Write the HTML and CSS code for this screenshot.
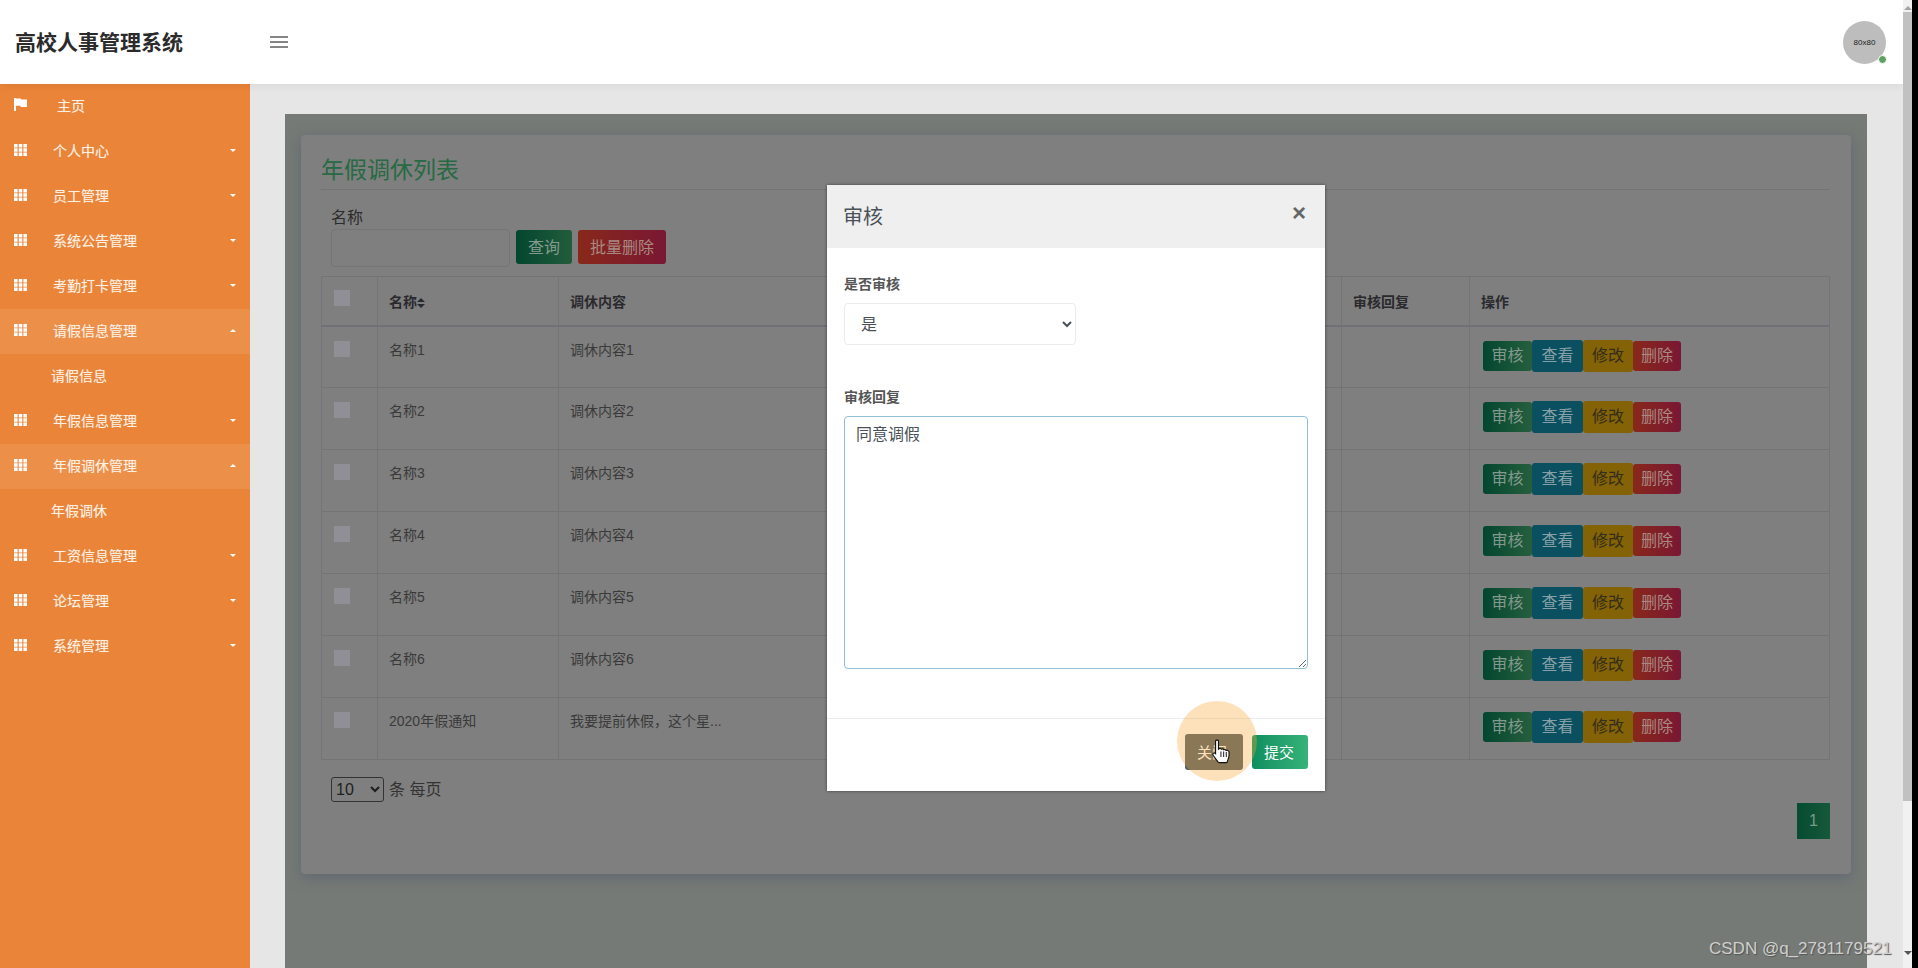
FILE: index.html
```html
<!DOCTYPE html>
<html lang="zh-CN">
<head>
    <meta charset="UTF-8">
    <title>高校人事管理系统</title>
    <link rel="stylesheet" href="styles.css">
</head>
<body>
    <svg class="icon-defs" width="0" height="0">
        <symbol id="icon-th" viewBox="0 0 13 12">
            <path d="M0 0h3.6v3.4H0zM4.7 0h3.6v3.4H4.7zM9.4 0H13v3.4H9.4zM0 4.3h3.6v3.4H0zM4.7 4.3h3.6v3.4H4.7zM9.4 4.3H13v3.4H9.4zM0 8.6h3.6V12H0zM4.7 8.6h3.6V12H4.7zM9.4 8.6H13V12H9.4z"/>
        </symbol>
    </svg>

    <div class="app">
        <div class="topbar">
            <div class="brand">高校人事管理系统</div>
            <div class="hamburger"><span></span><span></span><span></span></div>
            <div class="avatar">80x80<span class="online-dot"></span></div>
        </div>

        <div class="layout">
            <div class="sidebar">
                <div class="nav-item home">
                    <svg class="nav-icon" viewBox="0 0 13 13"><path d="M0 0h2v13H0zM2 .4h4.600l1 1.200H13v7.400H7l-1-1.200H2z"/></svg>
                    <span>主页</span>
                </div>
                <div class="nav-item"><svg class="nav-icon"><use href="#icon-th"/></svg><span>个人中心</span><i class="caret"></i></div>
                <div class="nav-item"><svg class="nav-icon"><use href="#icon-th"/></svg><span>员工管理</span><i class="caret"></i></div>
                <div class="nav-item"><svg class="nav-icon"><use href="#icon-th"/></svg><span>系统公告管理</span><i class="caret"></i></div>
                <div class="nav-item"><svg class="nav-icon"><use href="#icon-th"/></svg><span>考勤打卡管理</span><i class="caret"></i></div>
                <div class="nav-item open"><svg class="nav-icon"><use href="#icon-th"/></svg><span>请假信息管理</span><i class="caret"></i></div>
                <div class="nav-sub">请假信息</div>
                <div class="nav-item"><svg class="nav-icon"><use href="#icon-th"/></svg><span>年假信息管理</span><i class="caret"></i></div>
                <div class="nav-item open"><svg class="nav-icon"><use href="#icon-th"/></svg><span>年假调休管理</span><i class="caret"></i></div>
                <div class="nav-sub">年假调休</div>
                <div class="nav-item"><svg class="nav-icon"><use href="#icon-th"/></svg><span>工资信息管理</span><i class="caret"></i></div>
                <div class="nav-item"><svg class="nav-icon"><use href="#icon-th"/></svg><span>论坛管理</span><i class="caret"></i></div>
                <div class="nav-item"><svg class="nav-icon"><use href="#icon-th"/></svg><span>系统管理</span><i class="caret"></i></div>
            </div>

            <div class="main">
                <div class="panel">
                    <div class="card">
                        <div class="card-title">年假调休列表</div>
                        <div class="search">
                            <div class="search-label">名称</div>
                            <div class="search-row">
                                <input type="text" class="search-input">
                                <button class="btn btn-query">查询</button>
                                <button class="btn btn-batch">批量删除</button>
                            </div>
                        </div>

                        <table class="list-table">
                            <colgroup>
                                <col class="col-check">
                                <col class="col-name">
                                <col class="col-content">
                                <col class="col-reply">
                                <col class="col-action">
                            </colgroup>
                            <thead>
                                <tr>
                                    <th><span class="check head-check"></span></th>
                                    <th>名称<svg class="sort-mark" viewBox="0 0 8 10"><path d="M4 0l4 4H0zM4 10l4-4H0z"/></svg></th>
                                    <th>调休内容</th>
                                    <th>审核回复</th>
                                    <th>操作</th>
                                </tr>
                            </thead>
                            <tbody>
                                <tr>
                                    <td><span class="check"></span></td><td>名称1</td><td>调休内容1</td><td></td>
                                    <td><div class="actions"><span class="act act-audit">审核</span><span class="act act-view">查看</span><span class="act act-edit">修改</span><span class="act act-del">删除</span></div></td>
                                </tr>
                                <tr>
                                    <td><span class="check"></span></td><td>名称2</td><td>调休内容2</td><td></td>
                                    <td><div class="actions"><span class="act act-audit">审核</span><span class="act act-view">查看</span><span class="act act-edit">修改</span><span class="act act-del">删除</span></div></td>
                                </tr>
                                <tr>
                                    <td><span class="check"></span></td><td>名称3</td><td>调休内容3</td><td></td>
                                    <td><div class="actions"><span class="act act-audit">审核</span><span class="act act-view">查看</span><span class="act act-edit">修改</span><span class="act act-del">删除</span></div></td>
                                </tr>
                                <tr>
                                    <td><span class="check"></span></td><td>名称4</td><td>调休内容4</td><td></td>
                                    <td><div class="actions"><span class="act act-audit">审核</span><span class="act act-view">查看</span><span class="act act-edit">修改</span><span class="act act-del">删除</span></div></td>
                                </tr>
                                <tr>
                                    <td><span class="check"></span></td><td>名称5</td><td>调休内容5</td><td></td>
                                    <td><div class="actions"><span class="act act-audit">审核</span><span class="act act-view">查看</span><span class="act act-edit">修改</span><span class="act act-del">删除</span></div></td>
                                </tr>
                                <tr>
                                    <td><span class="check"></span></td><td>名称6</td><td>调休内容6</td><td></td>
                                    <td><div class="actions"><span class="act act-audit">审核</span><span class="act act-view">查看</span><span class="act act-edit">修改</span><span class="act act-del">删除</span></div></td>
                                </tr>
                                <tr>
                                    <td><span class="check"></span></td><td>2020年假通知</td><td>我要提前休假，这个星...</td><td></td>
                                    <td><div class="actions"><span class="act act-audit">审核</span><span class="act act-view">查看</span><span class="act act-edit">修改</span><span class="act act-del">删除</span></div></td>
                                </tr>
                            </tbody>
                        </table>

                        <div class="page-size">
                            <select class="size-select"><option>10</option></select>
                            <span class="size-text">条 每页</span>
                        </div>
                        <div class="pager"><span class="page-num">1</span></div>
                    </div>

                    <div class="modal">
                        <div class="modal-header">
                            <div class="modal-title">审核</div>
                            <div class="modal-close">×</div>
                        </div>
                        <div class="modal-body">
                            <div class="field-label">是否审核</div>
                            <select class="field-select"><option>是</option><option>否</option></select>
                            <div class="field-label second">审核回复</div>
                            <textarea class="field-area">同意调假</textarea>
                        </div>
                        <div class="modal-footer">
                            <button class="btn btn-close">关闭</button>
                            <button class="btn btn-submit">提交</button>
                        </div>
                        <div class="click-circle"></div>
                        <svg class="hand-cursor" viewBox="0 0 17 23">
                            <path d="M3.200 1.600C3.200.6 5.800.6 5.800 1.600V9l.4-.4c.6-.5 1.800-.4 2.200.4.6-.5 1.800-.4 2.200.5.7-.4 1.800-.2 2.100.6.8-.4 2.200 0 2.400 1.100.3 2 .2 4.600-.6 6.500l-.9 2.600c-.1.4-.4.7-.8.7H6.400c-.4 0-.7-.2-.9-.5L1 14.400c-.8-1.300.7-2.700 1.900-1.700l.3.3z" fill="#fff" stroke="#111" stroke-width="1"/>
                            <path d="M8 11v5M10.400 11v5M12.800 11.500v4.500" fill="none" stroke="#333" stroke-width="1"/>
                        </svg>
                    </div>
                </div>
            </div>
        </div>
    </div>

    <div class="scrollbar">
        <div class="scroll-arrow up"></div>
        <div class="scroll-thumb"></div>
        <div class="scroll-arrow down"></div>
    </div>
    <div class="window-edge"></div>

    <div class="watermark">CSDN @q_2781179521</div>
</body>
</html>
```

FILE: styles.css
```css
* {
    margin: 0;
    padding: 0;
    box-sizing: border-box;
}

html, body {
    height: 100%;
    overflow: hidden;
}

body {
    display: flex;
    position: relative;
    font-family: "Liberation Sans", "Noto Sans CJK SC", sans-serif;
    font-size: 14px;
    color: #333;
    background-color: #e6e6e6;
}

.icon-defs {
    position: absolute;
}

.app {
    width: 1903px;
    height: 968px;
    display: flex;
    flex-direction: column;
    overflow: hidden;
}

/* top bar */
.topbar {
    height: 84px;
    flex: none;
    display: flex;
    align-items: center;
    padding: 0 21px 0 15px;
    background-color: #fff;
    box-shadow: 0 2px 8px rgba(0, 0, 0, 0.06);
    position: relative;
}

.brand {
    width: 255px;
    padding-bottom: 2px;
    font-size: 21px;
    font-weight: bold;
    color: #2b2b2b;
}

.hamburger {
    display: flex;
    flex-direction: column;
    gap: 3px;
    width: 18px;
}

.hamburger span {
    height: 2px;
    background-color: #858585;
}

.avatar {
    position: relative;
    width: 43px;
    height: 43px;
    margin-left: auto;
    margin-right: -4px;
    border-radius: 50%;
    background-color: #bdbdbd;
    color: #222;
    font-size: 8px;
    line-height: 43px;
    text-align: center;
}

.online-dot {
    position: absolute;
    right: -1px;
    bottom: 0;
    width: 9px;
    height: 9px;
    border: 1.500px solid #fff;
    border-radius: 50%;
    background-color: #5f9f62;
}

/* sidebar */
.layout {
    flex: 1;
    display: flex;
    min-height: 0;
}

.sidebar {
    width: 250px;
    flex: none;
    background-color: #ea8438;
    color: #fdf1e4;
    text-shadow: 0 0 1px rgba(255, 255, 255, 0.35);
}

.nav-item,
.nav-sub {
    height: 45px;
    display: flex;
    align-items: center;
    padding-left: 14px;
}

.nav-item span {
    padding-bottom: 3px;
}

.nav-item.open {
    background-color: #ec8f49;
}

.nav-sub {
    padding-left: 51px;
    padding-bottom: 4px;
}

.nav-icon {
    width: 13px;
    height: 12px;
    margin-right: 26px;
    margin-bottom: 3px;
    fill: #fff;
}

.home .nav-icon {
    height: 13px;
    margin-right: 30px;
    margin-bottom: 5px;
}

.caret {
    margin-left: auto;
    margin-right: 14px;
    margin-bottom: 3px;
    border-left: 3.500px solid transparent;
    border-right: 3.500px solid transparent;
    border-top: 3.500px solid #fff;
}

.open .caret {
    border-top: 0;
    border-bottom: 3.500px solid #fff;
}

/* main area */
.main {
    flex: 1;
    padding: 30px 37px 0 35px;
}

.panel {
    position: relative;
    height: 100%;
    padding: 21px 16px 0;
    background-color: #757a76;
}

.card {
    height: 739px;
    padding: 16px 21px 0 20px;
    border-radius: 4px;
    background-color: #7f7f7f;
    box-shadow: 0 4px 14px rgba(80, 85, 110, 0.5);
}

.card-title {
    height: 39px;
    font-size: 23px;
    line-height: 38px;
    color: #276a44;
    border-bottom: 1px solid #737378;
}

.search {
    padding-left: 10px;
    margin-top: 17px;
}

.search-label {
    font-size: 16px;
    line-height: 22px;
    color: #2c2c2c;
}

.search-row {
    display: flex;
    align-items: center;
    gap: 6px;
}

.search-input {
    width: 179px;
    height: 38px;
    border: 1px solid #757575;
    border-radius: 4px;
    background-color: #7f7f7f;
}

.btn {
    border: none;
    border-radius: 3px;
    font-family: inherit;
    font-size: 16px;
    height: 34px;
    margin-bottom: 2px;
    padding-bottom: 2px;
}

.btn-query {
    width: 56px;
    background: linear-gradient(90deg, #03462f, #225c3c);
    color: #84998d;
}

.btn-batch {
    width: 88px;
    background: linear-gradient(90deg, #88281a, #7a1734);
    color: #a88a82;
}

/* table */
.list-table {
    width: 1508px;
    margin-top: 9px;
    border-collapse: collapse;
    table-layout: fixed;
    color: #333;
}

.col-check { width: 56px; }
.col-name { width: 181px; }
.col-content { width: 783px; }
.col-reply { width: 128px; }
.col-action { width: 360px; }

.list-table th,
.list-table td {
    border: 1px solid #737378;
    padding: 11px 12px 12px 11px;
    text-align: left;
    vertical-align: top;
    line-height: 24px;
    font-weight: normal;
}

.list-table th {
    height: 49px;
    vertical-align: middle;
    padding-top: 10px;
    padding-bottom: 7px;
    font-weight: bold;
    color: #2a2a2e;
    border-bottom: 2px solid #707076;
}

.list-table td {
    height: 62px;
    color: #3a3a3a;
}

.check {
    display: block;
    width: 16px;
    height: 16px;
    margin-top: 3px;
    margin-left: 1px;
    background-color: #8f8f95;
}

.head-check {
    margin-top: -9px;
}

.sort-mark {
    width: 8px;
    height: 10px;
    fill: #2a2a2e;
    vertical-align: -1px;
}

.actions {
    display: flex;
    align-items: center;
    margin-top: 2px;
    padding-left: 2px;
}

.act {
    width: 49px;
    height: 30px;
    border-radius: 3px;
    font-size: 16px;
    line-height: 29px;
    text-align: center;
}

.act-audit {
    background: linear-gradient(90deg, #03462f, #265f3e);
    color: #84998d;
}

.act-view {
    width: 51px;
    height: 32px;
    line-height: 31px;
    background-color: #0a5060;
    color: #87a0a7;
}

.act-edit {
    width: 50px;
    height: 32px;
    line-height: 31px;
    background-color: #846306;
    color: #332d1b;
}

.act-del {
    width: 48px;
    background: linear-gradient(90deg, #88281a, #7a1734);
    color: #a88a82;
}

/* pager */
.page-size {
    display: flex;
    align-items: center;
    gap: 5px;
    height: 25px;
    margin-top: 17px;
    padding-left: 10px;
    font-size: 16px;
    color: #333;
}

.size-text {
    padding-bottom: 3px;
}

.size-select {
    width: 53px;
    height: 25px;
    border: 1px solid #333;
    border-radius: 3px;
    background-color: #7f7f7f;
    color: #1e1e1e;
    font-family: inherit;
    font-size: 16px;
}

.pager {
    display: flex;
    justify-content: flex-end;
    margin-top: 1px;
}

.page-num {
    width: 33px;
    height: 36px;
    background: linear-gradient(90deg, #064c32, #16583a);
    color: #7a9a88;
    font-size: 16px;
    line-height: 36px;
    text-align: center;
}

/* modal */
.modal {
    position: absolute;
    left: 542px;
    top: 71px;
    width: 498px;
    height: 606px;
    background-color: #fff;
    box-shadow: 0 0 3px rgba(0, 0, 0, 0.5);
}

.modal-header {
    height: 63px;
    display: flex;
    align-items: center;
    justify-content: space-between;
    padding: 0 19px 0 16px;
    background-color: #efefef;
}

.modal-title {
    padding-bottom: 2px;
    font-size: 20px;
    color: #4a5157;
}

.modal-close {
    font-size: 24px;
    font-weight: bold;
    color: #666;
    margin-bottom: 8px;
}

.modal-body {
    padding: 25px 17px 0;
}

.field-label {
    font-size: 14px;
    font-weight: bold;
    line-height: 22px;
    color: #555;
}

.field-label.second {
    margin-top: 41px;
}

.field-select {
    display: block;
    width: 232px;
    height: 42px;
    margin-top: 8px;
    padding-left: 12px;
    border: 1px solid #e9ecef;
    border-radius: 4px;
    background-color: #fff;
    color: #495057;
    font-family: inherit;
    font-size: 16px;
}

.field-area {
    display: block;
    width: 464px;
    height: 253px;
    margin-top: 8px;
    padding: 6px 11px;
    border: 1px solid #8fbfd6;
    border-radius: 4px;
    outline: none;
    color: #495057;
    font-family: inherit;
    font-size: 16px;
    line-height: 24px;
}

.modal-footer {
    display: flex;
    justify-content: flex-end;
    align-items: center;
    gap: 9px;
    margin-top: 49px;
    padding: 15px 17px 0 0;
    border-top: 1px solid #e9ecef;
}

.modal-footer .btn {
    margin: 0;
    font-size: 15px;
}

.btn-close {
    width: 58px;
    height: 36px;
    background-color: #505d65;
    color: #fff;
    text-align: left;
    padding-left: 12px;
}

.btn-submit {
    width: 56px;
    padding-right: 2px;
    background: linear-gradient(90deg, #0f8f5f, #38b27a);
    color: #fff;
}

.click-circle {
    position: absolute;
    left: 350px;
    top: 516px;
    width: 80px;
    height: 80px;
    border-radius: 50%;
    background-color: rgba(245, 170, 60, 0.35);
}

.hand-cursor {
    position: absolute;
    left: 385px;
    top: 554px;
    width: 19px;
    height: 26px;
}

/* window scrollbar */
.scrollbar {
    width: 9px;
    height: 968px;
    flex: none;
    background-color: #f1f1f1;
}

.scroll-arrow {
    width: 0;
    margin: 6px auto 0;
    border-left: 4px solid transparent;
    border-right: 4px solid transparent;
}

.scroll-arrow.up {
    height: 4px;
    border-bottom: 4px solid #a3a3a3;
}

.scroll-arrow.down {
    margin-top: 150px;
    border-top: 4px solid #555;
}

.scroll-thumb {
    height: 789px;
    margin-top: 2px;
    background-color: #c1c1c1;
}

.window-edge {
    flex: 1;
    background-color: #000;
}

.watermark {
    position: absolute;
    left: 1709px;
    bottom: 9px;
    font-size: 17px;
    line-height: 20px;
    color: #cfcfcf;
    text-shadow: 1px 1px 1px #555;
    white-space: nowrap;
}
```
